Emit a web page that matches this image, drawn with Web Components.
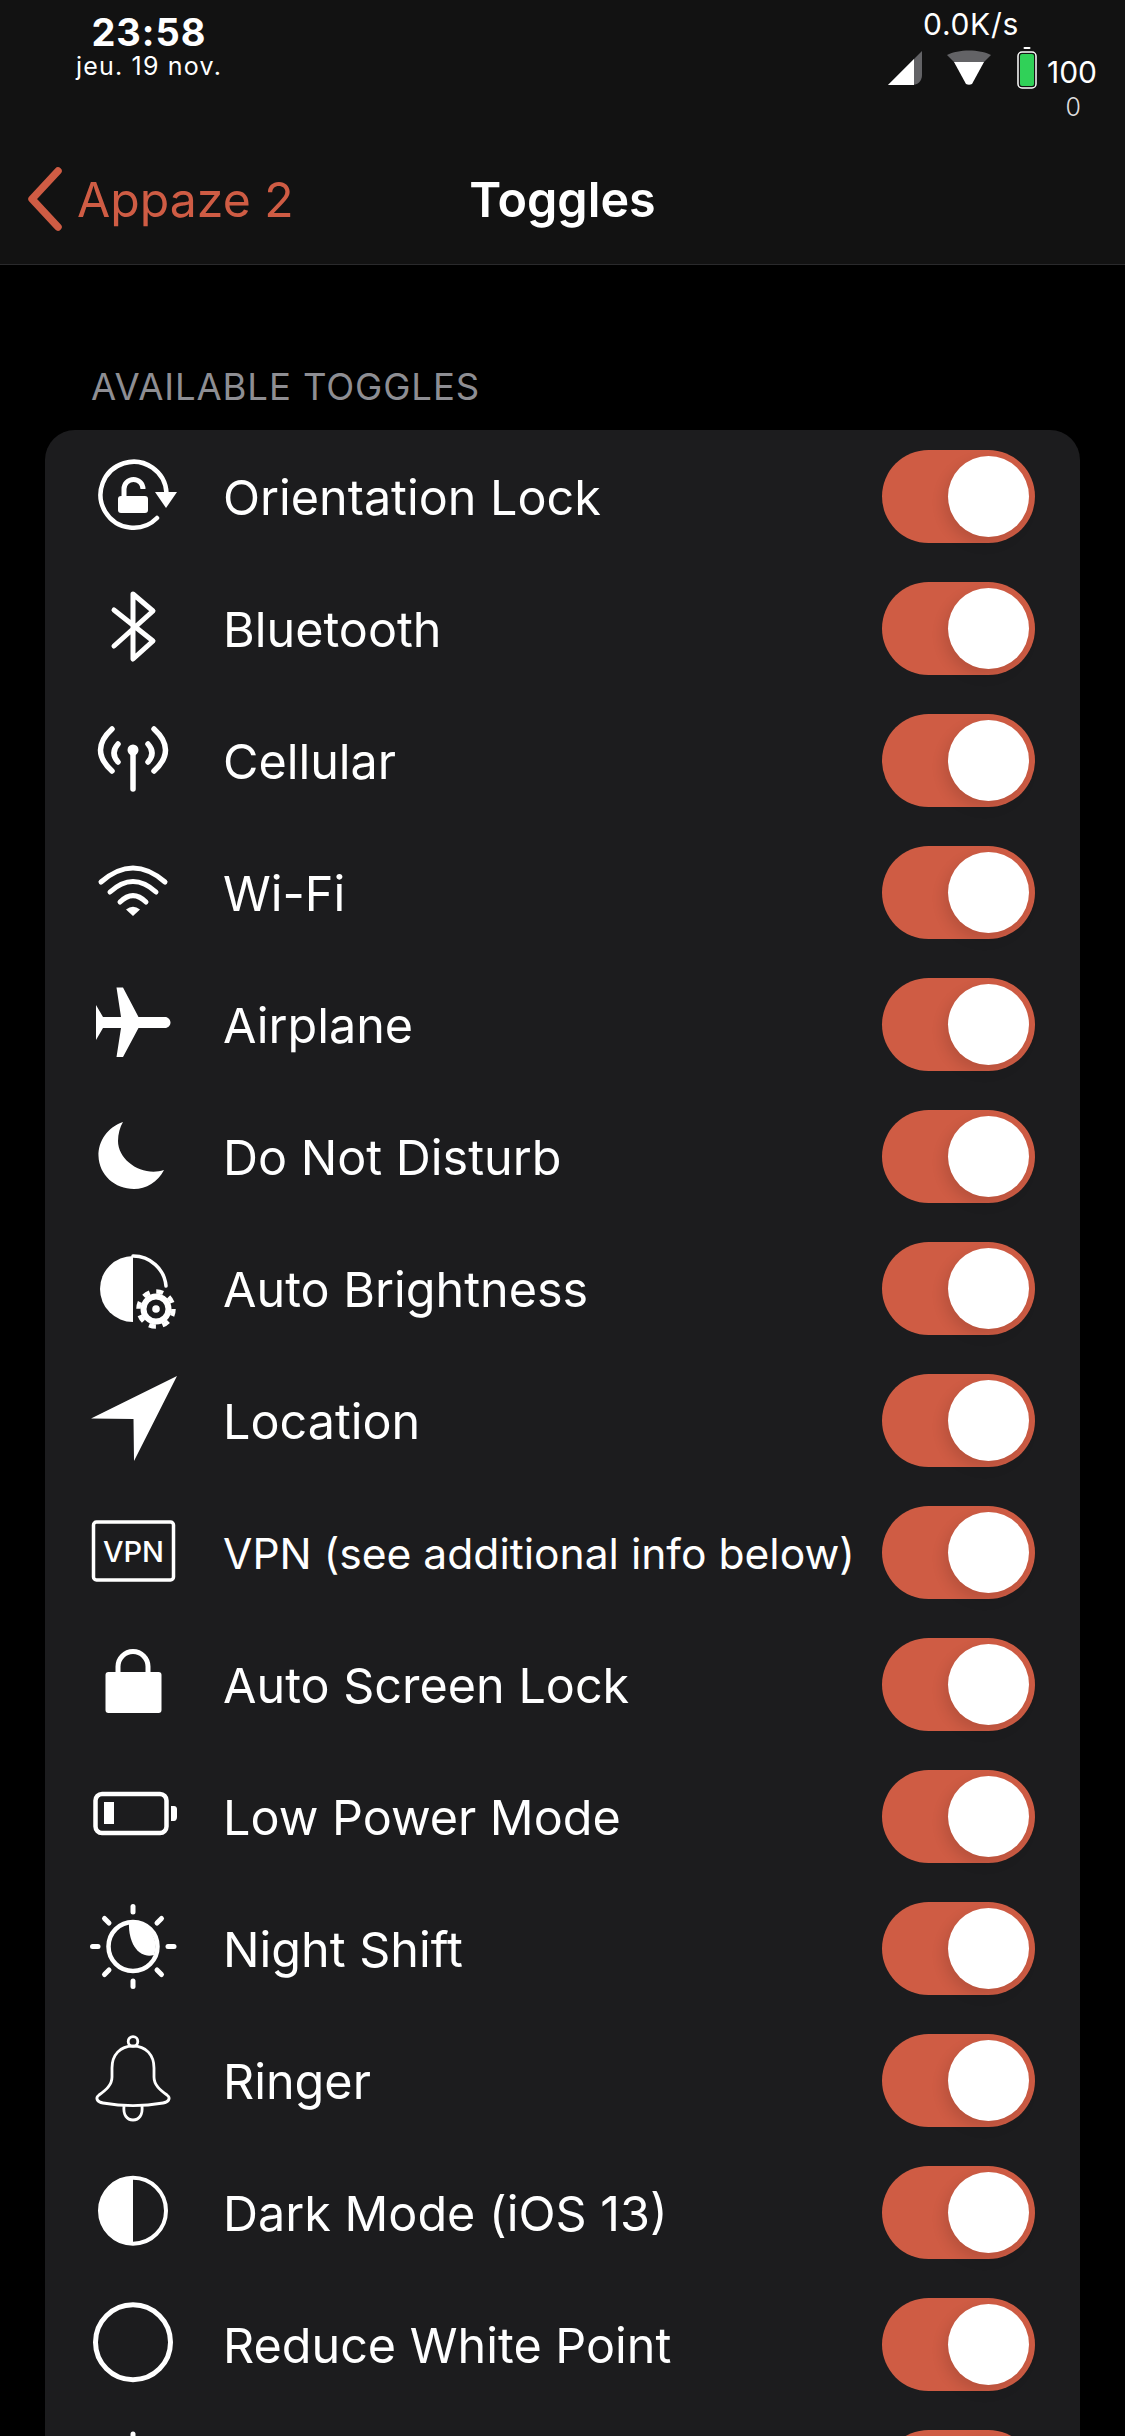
<!DOCTYPE html>
<html>
<head>
<meta charset="utf-8">
<title>Toggles</title>
<style>
    html, body { margin: 0; padding: 0; background: #000; }
    body { width: 1125px; height: 2436px; overflow: hidden; font-family: Inter, "Noto Sans", sans-serif; color: #fff; }
</style>
</head>
<body>
<app-header></app-header>
<toggle-section heading="AVAILABLE TOGGLES">
    <toggle-row icon="orientation">Orientation Lock</toggle-row>
    <toggle-row icon="bluetooth">Bluetooth</toggle-row>
    <toggle-row icon="cellular">Cellular</toggle-row>
    <toggle-row icon="wifi">Wi-Fi</toggle-row>
    <toggle-row icon="airplane">Airplane</toggle-row>
    <toggle-row icon="moon">Do Not Disturb</toggle-row>
    <toggle-row icon="brightness">Auto Brightness</toggle-row>
    <toggle-row icon="location">Location</toggle-row>
    <toggle-row icon="vpn" small>VPN (see additional info below)</toggle-row>
    <toggle-row icon="lock">Auto Screen Lock</toggle-row>
    <toggle-row icon="battery">Low Power Mode</toggle-row>
    <toggle-row icon="nightshift">Night Shift</toggle-row>
    <toggle-row icon="ringer">Ringer</toggle-row>
    <toggle-row icon="darkmode">Dark Mode (iOS 13)</toggle-row>
    <toggle-row icon="whitepoint">Reduce White Point</toggle-row>
    <toggle-row icon="sun"></toggle-row>
</toggle-section>

<script>
const BG = '#1c1c1e'

// all icons drawn on a 90x90 box, white on the card colour
const ICONS = {
    orientation: `
        <path d="M78.500 42A33 33 0 1 0 69 67" fill="none" stroke="#fff" stroke-width="4.500" stroke-linecap="round"/>
        <path d="M67 41H89L78 57Z" fill="#fff"/>
        <rect x="30" y="45" width="30" height="17" rx="3" fill="#fff"/>
        <path d="M36 46V38a9.500 9.500 0 0 1 19 0" fill="none" stroke="#fff" stroke-width="5"/>`,
    bluetooth: `
        <path d="M26 27L65 58L45 76V11L65 28L26 63" fill="none" stroke="#fff" stroke-width="5" stroke-linecap="round" stroke-linejoin="round"/>`,
    cellular: `
        <g fill="none" stroke="#fff" stroke-width="5.500" stroke-linecap="round">
            <path d="M45 36V74"/>
            <path d="M30 29Q22 38 30 47"/><path d="M60 29Q68 38 60 47"/>
            <path d="M24 14Q1 35 24 56"/><path d="M66 14Q89 35 66 56"/>
        </g>
        <circle cx="45" cy="35" r="5.500" fill="#fff"/>`,
    wifi: `
        <g fill="none" stroke="#fff" stroke-linecap="round" stroke-width="5">
            <path d="M13 35Q45 7 77 35"/>
            <path d="M22 45Q45 24 68 45"/>
            <path d="M32 55Q45 42 58 55"/>
        </g>
        <path d="M38 62.500Q45 57 52 62.500L45 69Z" fill="#fff"/>`,
    airplane: `
        <path d="M82.500 43.500C82.500 46.500 80 49 77 49H50.500L35 78H28.500L33 49H15L8 61V26L15 38H33L28.500 8.500H35L50.500 38H77C80 38 82.500 40.500 82.500 43.500Z" fill="#fff"/>`,
    moon: `
        <path d="M35 11C20 16 10 30 10.500 45C11 64 27 78 46 78C58 78 70 71 76 59C55 66 30 50 30 30C30 23 32 16 35 11Z" fill="#fff"/>`,
    brightness: `
        <path d="M45 13A33 33 0 0 0 45 79Z" fill="#fff"/>
        <path d="M45 13A33 33 0 0 1 78 43" fill="none" stroke="#fff" stroke-width="3.500" stroke-linecap="round"/>
        <circle cx="68" cy="66" r="17.500" fill="none" stroke="#fff" stroke-width="4.500" stroke-dasharray="7 6.700"/>
        <circle cx="68" cy="66" r="12.500" fill="none" stroke="#fff" stroke-width="6"/>
        <circle cx="68" cy="66" r="3.800" fill="#fff"/>`,
    location: `<path d="M89 1L3 43.500L45.500 44L46 86Z" fill="#fff"/>`,
    vpn: `
        <rect x="5.500" y="15" width="80" height="58" rx="3" fill="none" stroke="#fff" stroke-width="3.500"/>
        <text x="45.500" y="55" text-anchor="middle" font-family="Inter, sans-serif" font-weight="500" font-size="29" fill="#fff">VPN</text>`,
    lock: `
        <rect x="17.500" y="33" width="56" height="41" rx="3" fill="#fff"/>
        <path d="M30 35V27.500a15 15 0 0 1 30 0V35" fill="none" stroke="#fff" stroke-width="5"/>`,
    battery: `
        <rect x="7.500" y="23" width="71" height="39" rx="6.500" fill="none" stroke="#fff" stroke-width="4.500"/>
        <rect x="16" y="31" width="10" height="22" fill="#fff"/>
        <path d="M83 35H86C88 35 89 36.500 89 38V46C89 48 88 50 86 50H83Z" fill="#fff"/>`,
    nightshift: `
        <circle cx="45" cy="43.500" r="24.500" fill="none" stroke="#fff" stroke-width="4.500"/>
        <path d="M41 19A24.500 24.500 0 0 1 66 52C52 56 40 42 41 19Z" fill="#fff"/>
        <g stroke="#fff" stroke-width="5" stroke-linecap="round">
            <path d="M45 3.500V9"/><path d="M45 78V83.500"/>
            <path d="M4.500 43.500H10"/><path d="M80 43.500H86"/>
            <path d="M16.500 15.500L21 20"/><path d="M73.500 15.500L69 20"/>
            <path d="M16.500 71.500L21 67"/><path d="M73.500 71.500L69 67"/>
        </g>`,
    ringer: `
        <g fill="none" stroke="#fff" stroke-width="2.800">
            <circle cx="45" cy="6.500" r="4.800"/>
            <path d="M45 11C32 11 24 20 24 33V42C24 50 18 55 11 60C7 63 9 67 15 68C35 71.500 55 71.500 75 68C81 67 83 63 79 60C72 55 66 50 66 42V33C66 20 58 11 45 11Z"/>
            <path d="M36 71C35 80 39 85 45 85C51 85 55 80 54 71"/>
        </g>`,
    darkmode: `
        <circle cx="45" cy="43.700" r="33" fill="none" stroke="#fff" stroke-width="4"/>
        <path d="M45 10.700A33 33 0 0 0 45 76.700Z" fill="#fff"/>`,
    whitepoint: `<circle cx="45" cy="43.300" r="37.500" fill="none" stroke="#fff" stroke-width="5"/>`,
    sun: `<path d="M45 3V12" stroke="#fff" stroke-width="5" stroke-linecap="round"/>`
}

class AppHeader extends HTMLElement {
    constructor() {
        super()
        this.attachShadow({ mode: 'open' })
        this.shadowRoot.innerHTML = `
            <style>
                :host {
                    display: block;
                    height: 264px;
                    background: #121212;
                    border-bottom: 1px solid #2a2a2c;
                }
                #status {
                    display: flex;
                    justify-content: space-between;
                    height: 134px;
                    padding: 0 28px 0 74px;
                    box-sizing: border-box;
                }
                #clock {
                    display: flex;
                    flex-direction: column;
                    align-items: center;
                    padding-top: 12px;
                    width: 150px;
                }
                #time { font-size: 38px; font-weight: 700; line-height: 40px; letter-spacing: 1px; }
                #date { font-size: 25px; font-weight: 400; line-height: 26px; letter-spacing: 1.2px; margin-top: 1px; }
                #right {
                    display: flex;
                    flex-direction: column;
                    align-items: flex-end;
                    padding-top: 7px;
                }
                #speed { font-size: 30px; line-height: 34px; margin-right: 78px; letter-spacing: 0.7px; }
                #indicators { display: flex; align-items: center; height: 42px; margin-top: 6px; }
                #pct { font-size: 30px; line-height: 36px; margin-left: 10px; font-weight: 400; margin-top: 8px; }
                #zero { font-size: 25px; line-height: 28px; color: #ddd; margin: 4px 16px 0 0; font-weight: 300; }
                svg { display: block; }
                #nav {
                    display: flex;
                    align-items: center;
                    justify-content: center;
                    position: relative;
                    height: 130px;
                }
                #back {
                    position: absolute;
                    left: 27px;
                    top: 33px;
                    display: flex;
                    align-items: center;
                    gap: 14px;
                    color: #cf5c44;
                    font-size: 48.200px;
                    font-weight: 400;
                }
                h1 { margin: 0; font-size: 48.500px; font-weight: 600; }
            </style>
            <div id="status">
                <div id="clock">
                    <span id="time">23:58</span>
                    <span id="date">jeu. 19 nov.</span>
                </div>
                <div id="right">
                    <span id="speed">0.0K/s</span>
                    <div id="indicators">
                        <svg width="36" height="36" viewBox="0 0 36 36">
                            <path d="M1 35L35 1V25C35 31 31 35 25 35Z" fill="#636366"/>
                            <path d="M1 35L27 9V35Z" fill="#fff"/>
                        </svg>
                        <svg width="46" height="36" viewBox="0 0 46 36" style="margin-left:23px">
                            <path d="M1 5C12 -1 34 -1 45 5L36 14H10Z" fill="#636366"/>
                            <path d="M8 12H38L26 34C24 35 22 35 20 34Z" fill="#fff"/>
                        </svg>
                        <svg width="20" height="42" viewBox="0 0 20 42" style="margin-left:25px">
                            <rect x="6.500" y="0" width="7" height="2" rx="1" fill="#fff"/>
                            <rect x="1" y="5" width="18" height="36" rx="4" fill="none" stroke="#fff" stroke-width="1.500"/>
                            <rect x="3" y="7" width="14" height="32" rx="2" fill="#30d158"/>
                        </svg>
                        <span id="pct">100</span>
                    </div>
                    <span id="zero">0</span>
                </div>
            </div>
            <div id="nav">
                <div id="back">
                    <svg width="36" height="64" viewBox="0 0 36 64">
                        <path d="M31 4L5 32L31 60" fill="none" stroke="#cf5c44" stroke-width="7.500" stroke-linecap="round" stroke-linejoin="round"/>
                    </svg>
                    <span>Appaze 2</span>
                </div>
                <h1>Toggles</h1>
            </div>
        `
    }
}

class ToggleSection extends HTMLElement {
    constructor() {
        super()
        this.attachShadow({ mode: 'open' })
        this.shadowRoot.innerHTML = `
            <style>
                :host { display: block; padding: 0 45px; }
                #title {
                    color: #8e8e93;
                    font-size: 36.500px;
                    letter-spacing: 0.9px;
                    line-height: 40px;
                    padding: 102px 0 0 46px;
                    height: 63px;
                }
                #card {
                    background: ${BG};
                    border-radius: 30px;
                    overflow: hidden;
                }
            </style>
            <div id="title"></div>
            <div id="card"><slot></slot></div>
        `
        this.shadowRoot.getElementById('title').textContent = this.getAttribute('heading')
    }
}

class ToggleRow extends HTMLElement {
    constructor() {
        super()
        this.attachShadow({ mode: 'open' })
        this.shadowRoot.innerHTML = `
            <style>
                :host {
                    display: flex;
                    align-items: center;
                    height: 132px;
                    padding: 0 45px 0 43px;
                    font-size: 48.500px;
                }
                :host([small]) { font-size: 42.600px; }
                svg { flex: none; width: 90px; height: 90px; margin-right: 45px; overflow: visible; }
                #label { flex: 1; white-space: nowrap; padding-top: 2px; }
            </style>
            <svg viewBox="0 0 90 90">${ICONS[this.getAttribute('icon')]}</svg>
            <span id="label"><slot></slot></span>
            <toggle-switch></toggle-switch>
        `
    }
}

class ToggleSwitch extends HTMLElement {
    constructor() {
        super()
        this.attachShadow({ mode: 'open' })
        this.shadowRoot.innerHTML = `
            <style>
                :host {
                    display: flex;
                    align-items: center;
                    justify-content: flex-end;
                    flex: none;
                    width: 153px;
                    height: 93px;
                    padding-right: 6px;
                    box-sizing: border-box;
                    border-radius: 47px;
                    background: #cf5c44;
                }
                #thumb {
                    width: 81px;
                    height: 81px;
                    border-radius: 50%;
                    background: #fff;
                    box-shadow: -4px 6px 14px rgba(0,0,0,0.12);
                }
            </style>
            <div id="thumb"></div>
        `
    }
}

customElements.define('app-header', AppHeader)
customElements.define('toggle-section', ToggleSection)
customElements.define('toggle-row', ToggleRow)
customElements.define('toggle-switch', ToggleSwitch)
</script>
</body>
</html>
